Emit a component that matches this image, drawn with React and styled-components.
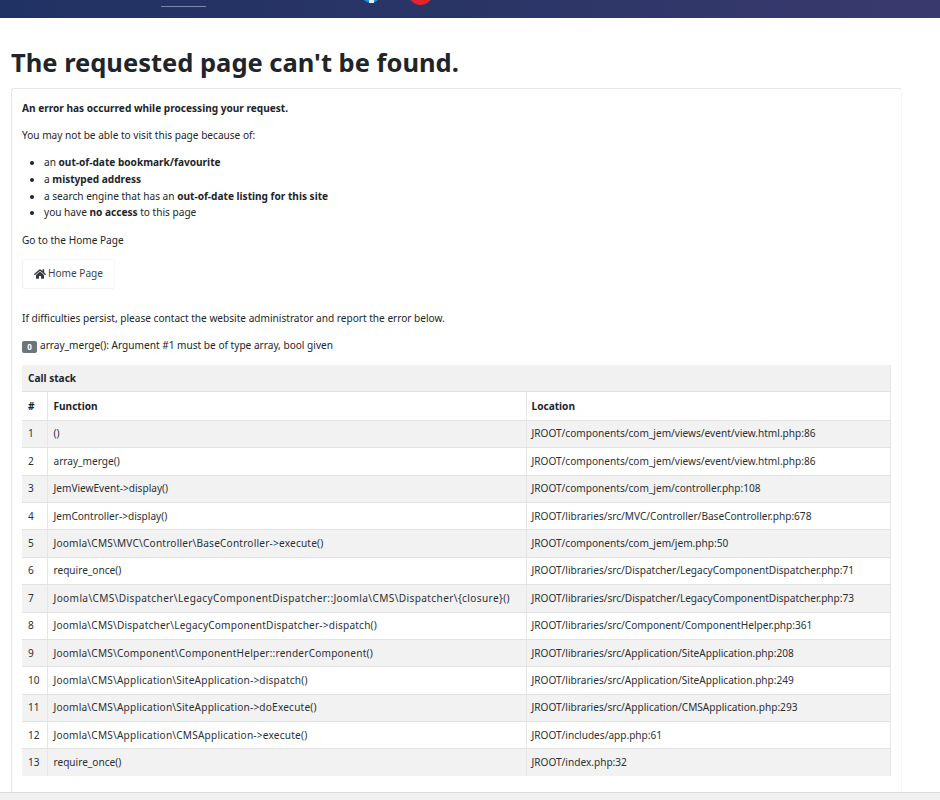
import React from "react";
import styled, { createGlobalStyle } from "styled-components";
import { FaHome } from "react-icons/fa";

const GlobalStyle = createGlobalStyle`
  html, body {
    margin: 0;
    padding: 0;
    background: #fff;
  }
  body {
    font-family: "Noto Sans", "Open Sans", sans-serif;
    font-size: 10.1px;
    line-height: 1.5;
    color: #212529;
    height: 800px;
    overflow: hidden;
  }
`;

const Page = styled.div`
  display: flex;
  flex-direction: column;
  height: 800px;
  overflow: hidden;
`;

const Header = styled.header`
  flex: none;
  height: 18px;
  position: relative;
  overflow: hidden;
  background: linear-gradient(90deg, #203263 0%, #2a3566 50%, #3a396e 100%);
`;

const NavLine = styled.span`
  position: absolute;
  left: 161px;
  top: 6px;
  width: 45px;
  height: 1px;
  background: #7d87a8;
`;

const SocialDot = styled.span`
  position: absolute;
  left: ${(p) => p.$left}px;
  top: ${(p) => p.$bottom - p.$size}px;
  width: ${(p) => p.$size}px;
  height: ${(p) => p.$size}px;
  border-radius: 50%;
  background: ${(p) => p.$color};

  &::after {
    content: "";
    display: ${(p) => (p.$stem ? "block" : "none")};
    position: absolute;
    left: 50%;
    bottom: 0;
    width: 5px;
    height: 3px;
    margin-left: -2px;
    background: #dfeefa;
  }
`;

const Main = styled.main`
  flex: 1;
  min-height: 0;
  padding: 26px 38px 0 11px;
`;

const Title = styled.h1`
  margin: 0 0 7px;
  font-size: 25.5px;
  line-height: 37px;
  font-weight: 700;
`;

const Card = styled.section`
  border: 1px solid #e6e6e6;
  border-bottom: none;
  border-right-color: #f6f6f6;
  border-radius: 3px 3px 0 0;
  padding: 11px 10px 0 10px;
  height: 720px;
  box-sizing: border-box;
`;

const Text = styled.p`
  margin: 0 0 ${(p) => p.$gap ?? 11}px;
  line-height: 16px;
  font-weight: ${(p) => (p.$bold ? 700 : 400)};
`;

const ReasonList = styled.ul`
  margin: 0 0 11px;
  padding-left: 22px;
  list-style: disc;

  li {
    line-height: 16.75px;
  }
`;

const HomeButton = styled.a`
  display: inline-flex;
  align-items: center;
  gap: 2px;
  width: 93px;
  height: 30px;
  box-sizing: border-box;
  padding-left: 11px;
  margin-bottom: 21px;
  border: 1px solid #f0f0f0;
  border-right-color: #f8f8f8;
  border-top-color: #f6f6f6;
  border-radius: 3px;
  color: #3d4349;
  text-decoration: none;

  svg {
    font-size: 12px;
    color: #343a40;
  }
`;

const Badge = styled.span`
  display: inline-block;
  width: 15px;
  height: 12px;
  margin-right: 3px;
  border-radius: 2px;
  background: #6c757d;
  color: #fff;
  font-size: 8px;
  font-weight: 700;
  line-height: 12px;
  text-align: center;
  vertical-align: -1px;
`;

const Stack = styled.table`
  width: 869px;
  border-collapse: collapse;
  table-layout: fixed;
  border-right: 1px solid #e6e6e6;
`;

const Caption = styled.th`
  height: 26.4px;
  padding: 0 6px;
  background: #f1f1f1;
  border-bottom: 1px solid #e2e2e2;
  text-align: left;
  font-weight: 700;
`;

const HeadCell = styled.th`
  height: 27.4px;
  padding: 0 5px;
  text-align: left;
  font-weight: 700;
  border-bottom: 1px solid #e2e2e2;
  border-left: 1px solid #e6e6e6;

  &:first-child {
    border-left: none;
    padding-left: 6px;
  }

  &:nth-child(2) {
    padding-left: 6px;
  }
`;

const Row = styled.tr`
  background: ${(p) => (p.$odd ? "#f2f2f2" : "#fff")};
`;

const Cell = styled.td`
  height: 26.4px;
  padding: 0 5px;
  border-bottom: 1px solid #e2e2e2;
  border-left: 1px solid #e6e6e6;
  white-space: nowrap;
  color: #2b3035;
  letter-spacing: ${(p) => p.$spread ?? 0}px;

  &:first-child {
    border-left: none;
    padding-left: 6px;
  }

  &:nth-child(2) {
    padding-left: 6px;
  }

  tr:last-child > & {
    border-bottom: none;
  }
`;

const Footer = styled.div`
  flex: none;
  height: 7px;
  background: #f1f1f1;
  border-top: 1px solid #dcdcdc;
`;

const rows = [
  ["()", "JROOT/components/com_jem/views/event/view.html.php:86"],
  ["array_merge()", "JROOT/components/com_jem/views/event/view.html.php:86"],
  ["JemViewEvent->display()", "JROOT/components/com_jem/controller.php:108"],
  ["JemController->display()", "JROOT/libraries/src/MVC/Controller/BaseController.php:678"],
  ["Joomla\\CMS\\MVC\\Controller\\BaseController->execute()", "JROOT/components/com_jem/jem.php:50"],
  ["require_once()", "JROOT/libraries/src/Dispatcher/LegacyComponentDispatcher.php:71"],
  [
    "Joomla\\CMS\\Dispatcher\\LegacyComponentDispatcher::Joomla\\CMS\\Dispatcher\\{closure}()",
    "JROOT/libraries/src/Dispatcher/LegacyComponentDispatcher.php:73",
  ],
  ["Joomla\\CMS\\Dispatcher\\LegacyComponentDispatcher->dispatch()", "JROOT/libraries/src/Component/ComponentHelper.php:361"],
  ["Joomla\\CMS\\Component\\ComponentHelper::renderComponent()", "JROOT/libraries/src/Application/SiteApplication.php:208"],
  ["Joomla\\CMS\\Application\\SiteApplication->dispatch()", "JROOT/libraries/src/Application/SiteApplication.php:249"],
  ["Joomla\\CMS\\Application\\SiteApplication->doExecute()", "JROOT/libraries/src/Application/CMSApplication.php:293"],
  ["Joomla\\CMS\\Application\\CMSApplication->execute()", "JROOT/includes/app.php:61"],
  ["require_once()", "JROOT/index.php:32"],
];

const spreadFor = (fn) => {
  if (fn.length > 80) return 0.37;
  return fn.includes("\\") ? 0.2 : 0;
};

export default function App() {
  return (
    <Page>
      <GlobalStyle />
      <Header>
        <NavLine />
        <SocialDot $left={361} $size={20} $bottom={3} $color="#1f8fd8" $stem />
        <SocialDot $left={408} $size={25} $bottom={5} $color="#e3242f" />
      </Header>
      <Main>
        <Title>The requested page can't be found.</Title>
        <Card>
          <Text $bold>An error has occurred while processing your request.</Text>
          <Text $gap={11}>You may not be able to visit this page because of:</Text>
          <ReasonList>
            <li>an <b>out-of-date bookmark/favourite</b></li>
            <li>a <b>mistyped address</b></li>
            <li>a search engine that has an <b>out-of-date listing for this site</b></li>
            <li>you have <b>no access</b> to this page</li>
          </ReasonList>
          <Text $gap={11}>Go to the Home Page</Text>
          <HomeButton href="#">
            <FaHome /> Home Page
          </HomeButton>
          <Text>If difficulties persist, please contact the website administrator and report the error below.</Text>
          <Text $gap={12}>
            <Badge>0</Badge>array_merge(): Argument #1 must be of type array, bool given
          </Text>
          <Stack>
            <colgroup>
              <col style={{ width: 25 }} />
              <col style={{ width: 479 }} />
              <col />
            </colgroup>
            <thead>
              <tr>
                <Caption colSpan={3}>Call stack</Caption>
              </tr>
              <tr>
                <HeadCell>#</HeadCell>
                <HeadCell>Function</HeadCell>
                <HeadCell>Location</HeadCell>
              </tr>
            </thead>
            <tbody>
              {rows.map(([fn, loc], i) => (
                <Row key={i} $odd={i % 2 === 0}>
                  <Cell>{i + 1}</Cell>
                  <Cell $spread={spreadFor(fn)}>{fn}</Cell>
                  <Cell>{loc}</Cell>
                </Row>
              ))}
            </tbody>
          </Stack>
        </Card>
      </Main>
      <Footer />
    </Page>
  );
}
